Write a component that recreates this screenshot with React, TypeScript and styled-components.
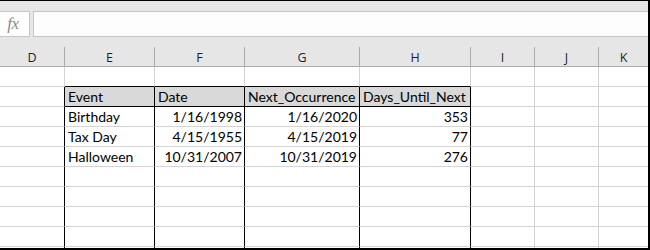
import React from "react";
import styled, { createGlobalStyle } from "styled-components";

const GlobalStyle = createGlobalStyle`
  html, body { margin: 0; padding: 0; background: #ffffff; }
`;

const COLS = ["D", "E", "F", "G", "H", "I", "J", "K"];
const WIDTHS = "65px 90px 90px 115px 111px 64px 64px 1fr";

const Frame = styled.div`
  width: 650px;
  height: 250px;
  box-sizing: border-box;
  border-top: 1px solid #000;
  border-right: 2px solid #000;
  border-bottom: 2px solid #000;
  overflow: hidden;
  background: #fff;
  display: flex;
  flex-direction: column;
`;

const FormulaArea = styled.div`
  height: 46px;
  box-sizing: border-box;
  padding-top: 10px;
  background: #e6e6e6;
  display: flex;
  gap: 3px;
  flex-shrink: 0;
`;

const FxBox = styled.div`
  width: 30px;
  height: 26px;
  box-sizing: border-box;
  border: 1px solid #c6c6c6;
  border-left: none;
  background: #ffffff;
  display: flex;
  align-items: center;
  justify-content: center;
  padding-right: 3px;
  font-family: "Liberation Serif", "DejaVu Serif", serif;
  font-style: italic;
  font-size: 17px;
  color: #8a8a8a;
  letter-spacing: -0.5px;
`;

const FormulaInput = styled.div`
  flex: 1;
  height: 26px;
  box-sizing: border-box;
  border: 1px solid #c6c6c6;
  border-right: none;
  background: #fdfdfd;
`;

const HeaderRow = styled.div`
  display: grid;
  grid-template-columns: ${WIDTHS};
  height: 20px;
  background: #e6e6e6;
  border-bottom: 1px solid #ababab;
  box-sizing: border-box;
  flex-shrink: 0;
`;

const ColHeader = styled.div<{ $last?: boolean }>`
  border-right: ${(p) => (p.$last ? "none" : "1px solid #ababab")};
  display: flex;
  align-items: center;
  justify-content: center;
  font-family: "Open Sans", "Noto Sans", sans-serif;
  font-size: 12.5px;
  color: #1e1e1e;
  line-height: 19px;
  padding-top: 1px;
`;

const Body = styled.div`
  display: grid;
  grid-template-columns: ${WIDTHS};
  grid-auto-rows: 20px;
`;

const Cell = styled.div<{
  $rightBlack?: boolean;
  $bottomBlack?: boolean;
  $last?: boolean;
  $fill?: boolean;
  $align?: "left" | "right";
}>`
  box-sizing: border-box;
  border-right: ${(p) => (p.$last ? "none" : `1px solid ${p.$rightBlack ? "#000" : "#d4d4d4"}`)};
  border-bottom: 1px solid ${(p) => (p.$bottomBlack ? "#000" : "#d4d4d4")};
  background: ${(p) => (p.$fill ? "#d9d9d9" : "#ffffff")};
  font-family: Lato, "Liberation Sans", sans-serif;
  font-size: 14px;
  color: #000;
  line-height: 19px;
  padding: 0 2px 0 3px;
  text-align: ${(p) => p.$align ?? "left"};
  white-space: nowrap;
  overflow: hidden;
`;

const tableRows: { text: string; align: "left" | "right" }[][] = [
  [
    { text: "Event", align: "left" },
    { text: "Date", align: "left" },
    { text: "Next_Occurrence", align: "left" },
    { text: "Days_Until_Next", align: "left" },
  ],
  [
    { text: "Birthday", align: "left" },
    { text: "1/16/1998", align: "right" },
    { text: "1/16/2020", align: "right" },
    { text: "353", align: "right" },
  ],
  [
    { text: "Tax Day", align: "left" },
    { text: "4/15/1955", align: "right" },
    { text: "4/15/2019", align: "right" },
    { text: "77", align: "right" },
  ],
  [
    { text: "Halloween", align: "left" },
    { text: "10/31/2007", align: "right" },
    { text: "10/31/2019", align: "right" },
    { text: "276", align: "right" },
  ],
];

const ROW_COUNT = 10;

export default function App() {
  const rows: React.ReactNode[] = [];
  for (let r = 0; r < ROW_COUNT; r++) {
    for (let c = 0; c < COLS.length; c++) {
      const inTableCols = c >= 1 && c <= 4;
      const inTableRows = r >= 1;
      const rightBlack = inTableRows && c <= 4;
      const bottomBlack = inTableCols && (r === 0 || r === 1);
      const data = r >= 1 && r <= 4 && inTableCols ? tableRows[r - 1][c - 1] : undefined;
      rows.push(
        <Cell
          key={`${r}-${c}`}
          $rightBlack={rightBlack}
          $bottomBlack={bottomBlack}
          $last={c === COLS.length - 1}
          $fill={r === 1 && inTableCols}
          $align={data?.align}
        >
          {data?.text ?? ""}
        </Cell>
      );
    }
  }
  return (
    <>
      <GlobalStyle />
      <Frame>
        <FormulaArea>
          <FxBox>fx</FxBox>
          <FormulaInput />
        </FormulaArea>
        <HeaderRow>
          {COLS.map((c, i) => (
            <ColHeader key={c} $last={i === COLS.length - 1}>
              {c}
            </ColHeader>
          ))}
        </HeaderRow>
        <Body>{rows}</Body>
      </Frame>
    </>
  );
}
